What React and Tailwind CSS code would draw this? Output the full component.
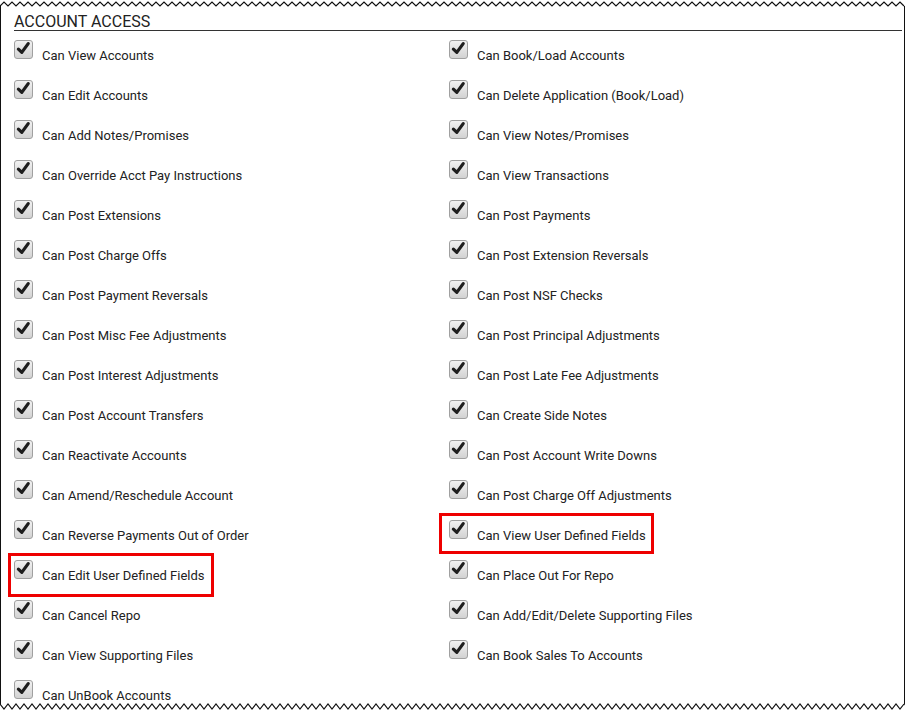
import React from "react";

const left = [
  "Can View Accounts",
  "Can Edit Accounts",
  "Can Add Notes/Promises",
  "Can Override Acct Pay Instructions",
  "Can Post Extensions",
  "Can Post Charge Offs",
  "Can Post Payment Reversals",
  "Can Post Misc Fee Adjustments",
  "Can Post Interest Adjustments",
  "Can Post Account Transfers",
  "Can Reactivate Accounts",
  "Can Amend/Reschedule Account",
  "Can Reverse Payments Out of Order",
  "Can Edit User Defined Fields",
  "Can Cancel Repo",
  "Can View Supporting Files",
  "Can UnBook Accounts",
];

const right = [
  "Can Book/Load Accounts",
  "Can Delete Application (Book/Load)",
  "Can View Notes/Promises",
  "Can View Transactions",
  "Can Post Payments",
  "Can Post Extension Reversals",
  "Can Post NSF Checks",
  "Can Post Principal Adjustments",
  "Can Post Late Fee Adjustments",
  "Can Create Side Notes",
  "Can Post Account Write Downs",
  "Can Post Charge Off Adjustments",
  "Can View User Defined Fields",
  "Can Place Out For Repo",
  "Can Add/Edit/Delete Supporting Files",
  "Can Book Sales To Accounts",
];

function Check() {
  return (
    <span className="mt-[4px] flex h-[19px] w-[19px] shrink-0 items-start justify-center rounded-[3px] border border-[#a0a0a0] bg-gradient-to-b from-[#f2f2f2] to-[#d2d2d2]">
      <svg width="17" height="15" viewBox="0 0 17 15">
        <path d="M3.4 8.2 L6.8 11.4 L13.2 2.6" fill="none" stroke="#1e1e1e" strokeWidth="3.2" strokeLinecap="round" strokeLinejoin="round" />
      </svg>
    </span>
  );
}

function Row({ label, mark }) {
  return (
    <div className="relative flex h-[40px] items-start">
      <Check />
      <span className="ml-[9px] mt-[12px] text-[13px] leading-[16px] text-[#222]">{label}</span>
      {mark === "left" && (
        <span className="pointer-events-none absolute left-[-6px] top-[-3px] h-[44px] w-[206px] border-[3px] border-[#ee0000]" />
      )}
      {mark === "right" && (
        <span className="pointer-events-none absolute left-[-10px] top-[-3px] h-[41px] w-[215px] border-[3px] border-[#ee0000]" />
      )}
    </div>
  );
}

function zig(y0, y1, width, step) {
  const pts = [];
  let i = 0;
  for (let x = 0; x <= width; x += step) {
    pts.push(`${x},${i % 2 === 0 ? y0 : y1}`);
    i++;
  }
  return pts.join(" ");
}

export default function App() {
  const rows = [];
  for (let i = 0; i < left.length; i++) {
    rows.push(
      <Row key={"l" + i} label={left[i]} mark={i === 13 ? "left" : null} />
    );
    if (i < right.length) {
      rows.push(
        <Row key={"r" + i} label={right[i]} mark={i === 12 ? "right" : null} />
      );
    } else {
      rows.push(<div key={"r" + i} />);
    }
  }

  const topZ = zig(6, 2, 904, 4);
  const botZ = zig(704, 709, 904, 4);

  return (
    <div
      className="relative h-[711px] w-[907px] overflow-hidden bg-white"
      style={{ fontFamily: "Roboto, 'Liberation Sans', Arial, sans-serif" }}
    >
      <div className="h-[711px] w-[905px] border-l border-r border-[#111] pl-[13px] pr-[2px]">
        <div className="border-b border-[#333] pt-[13px] text-[16px] leading-[17px] text-[#222]">
          ACCOUNT ACCESS
        </div>
        <div className="mt-[5px] grid grid-cols-[435px_1fr]">{rows}</div>
      </div>
      <svg
        className="pointer-events-none absolute left-0 top-0"
        width="907"
        height="711"
        viewBox="0 0 907 711"
      >
        <polygon points={`0,0 907,0 907,6 ${topZ.split(" ").reverse().join(" ")}`} fill="#fff" />
        <polyline points={topZ} fill="none" stroke="#111" strokeWidth="1.2" />
        <polygon points={`${botZ} 907,709 907,711 0,711`} fill="#fff" />
        <polyline points={botZ} fill="none" stroke="#111" strokeWidth="1.2" />
      </svg>
    </div>
  );
}
